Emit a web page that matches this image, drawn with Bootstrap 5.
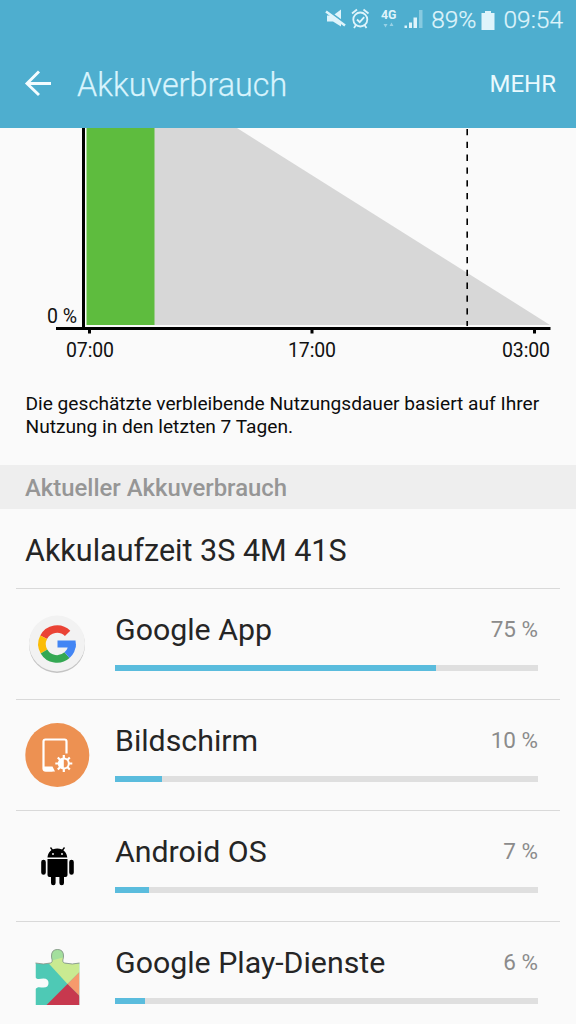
<!DOCTYPE html>
<html lang="de">
<head>
<meta charset="utf-8">
<meta name="viewport" content="width=device-width, initial-scale=1">
<title>Akkuverbrauch</title>
<link href="https://cdn.jsdelivr.net/npm/bootstrap@5.3.0/dist/css/bootstrap.min.css" rel="stylesheet">
<style>
body{font-family:Roboto,sans-serif;background:#fafafa;color:#252525;height:1024px;overflow:hidden;line-height:1}
svg{display:block;flex:none;overflow:visible}
.top-area{background:#4eaecf;height:128px}
.status-line{height:40px;padding-right:13px;color:#dff4fb;font-size:24.5px;font-weight:300;-webkit-text-stroke:.25px #dff4fb}
.status-icons{margin-right:5px}
.battery{margin:0 8px 0 5px}
.app-line{height:88px;padding:0 20px 0 24px}
.app-title{font-size:32.3px;font-weight:300;color:#d8f4fd;margin-left:25px;padding-top:2px;-webkit-text-stroke:.25px #d8f4fd}
.more{font-size:24px;color:#e9f9fe}
.chart{height:248px;overflow:hidden}
.note{font-size:19.15px;line-height:23px;color:#0c0c0c;padding:16px 20px 0 25.5px;height:89px}
.section-head{height:44px;background:#eeeeee;color:#969696;font-size:23.9px;font-weight:500;padding:2px 25px 0}
.runtime{height:79px;font-size:30.5px;padding:6px 25px 0}
.rule-top{margin:0 16px;border-top:1px solid #d9d9d9}
.usage{height:111px}
.usage .inner{padding:0 22px 0 9px;height:110px}
.usage-name{font-size:30.3px}
.usage-val{font-size:22.5px;color:#8b8b8b;padding-bottom:2px}
.usage-body{margin-left:26px;padding-top:23px}
.usage-top{height:36px}
.progress{--bs-progress-height:6px;--bs-progress-bg:#dfdfdf;--bs-progress-border-radius:0;--bs-progress-bar-bg:#5abcdd;margin-top:16.500px}
</style>
</head>
<body>
<header class="top-area">
  <div class="status-line d-flex align-items-center justify-content-end">
    <svg class="status-icons" width="108" height="40" viewBox="320 0 108 40" fill="#dff4fb">
      <path d="M329 15.500h6l8-6v17l-8-5h-6z"/>
      <path d="M329 10l19 14" stroke="#4eaecf" stroke-width="2"/><path d="M328 11.500l19 14" stroke="#dff4fb" stroke-width="2.500"/>
      <g transform="translate(1 .5)" fill="none" stroke="#dff4fb" stroke-width="1.800"><circle cx="361.300" cy="19" r="7"/><path d="M353 13l5-4M364.500 9l5 4M357 24.500l-2 3M365.500 24.500l2 3M358 19l2.700 2.700 4.500-5"/></g>
      <text x="383" y="18.500" font-size="12" font-weight="700" textLength="15.500" lengthAdjust="spacingAndGlyphs">4G</text>
      <path d="M385.500 24h4l-2 3.500zM391.500 26l2-3.500 2 3.500z" opacity=".5"/>
      <path d="M406.500 25.500h2.500v2.500h-2.500zM411 22.500h3V28h-3zM415.500 17.500h3.500V28h-3.500z"/><path d="M421 10h3.500v18H421z" opacity=".4"/>
    </svg>
    <span class="pct">89%</span>
    <svg class="battery" width="14" height="19" fill="#dff4fb"><path d="M4 0h6v2h3.500v17H.5V2H4z"/></svg>
    <span class="clock">09:54</span>
  </div>
  <nav class="app-line d-flex align-items-center">
    <svg width="28" height="28" fill="none" stroke="#f4fcff" stroke-width="2.900"><path d="M27 13.500H3M15 1.500L3 13.500l12 11.500"/></svg>
    <span class="app-title">Akkuverbrauch</span>
    <span class="more ms-auto">MEHR</span>
  </nav>
</header>
<main>
  <svg class="chart" width="576" height="248" viewBox="0 128 576 248">
    <path d="M154 128h83l313 197H154z" fill="#d7d7d7"/>
    <path d="M86.500 128h68v197h-68z" fill="#5ebc3e"/>
    <path d="M82 128h3v200h-3zM56 327h494.500v3H56zM88 330h3v3.500h-3zM310.500 330h3v3.500h-3zM533 330h3v3.500h-3z" fill="#000"/>
    <path d="M467.200 128v198" stroke="#000" stroke-width="1.600" stroke-dasharray="6.300 6.500" stroke-dashoffset="-1"/>
    <g font-size="19.500" fill="#111"><text x="47" y="322.500" textLength="30">0 %</text><text x="66" y="356.500" textLength="48">07:00</text><text x="288" y="356.500" textLength="48">17:00</text><text x="502" y="356.500" textLength="48">03:00</text></g>
  </svg>
  <p class="note mb-0">Die geschätzte verbleibende Nutzungsdauer basiert auf Ihrer Nutzung in den letzten 7 Tagen.</p>
  <h2 class="section-head d-flex align-items-center mb-0">Aktueller Akkuverbrauch</h2>
  <div class="runtime d-flex align-items-center">Akkulaufzeit 3S 4M 41S</div>

  <div class="usage"><div class="rule-top"><div class="inner d-flex">
    <svg class="mt-4" width="64" height="64" viewBox="0 0 64 64"><circle cx="32" cy="32" r="28" fill="#c4c4c4"/><circle cx="32" cy="30.500" r="28" fill="#f2f2f2"/>
      <g fill="none" stroke-width="7.600"><path d="M42.600 20.400A15 15 0 0018.640 24.190" stroke="#ea4335"/><path d="M18.640 24.190A15 15 0 0019.010 38.500" stroke="#fbbc05"/><path d="M19.010 38.500A15 15 0 0042 42.180" stroke="#34a853"/><path d="M42 42.180A15 15 0 0047 31" stroke="#4285f4"/></g><path d="M32.500 27.500h18q.6 3 .1 7H32.500z" fill="#4285f4"/>
    </svg>
    <div class="usage-body flex-grow-1"><div class="usage-top d-flex justify-content-between align-items-center"><span class="usage-name">Google App</span><span class="usage-val">75 %</span></div><div class="progress"><div class="progress-bar" style="width:76%"></div></div></div>
  </div></div></div>

  <div class="usage"><div class="rule-top"><div class="inner d-flex">
    <svg class="mt-4" width="64" height="64" viewBox="0 0 64 64"><circle cx="32.300" cy="31" r="32" fill="#ed9152"/>
      <path d="M41.500 29.500V17.500a2 2 0 00-2-2H20.500a2 2 0 00-2 2V44.500a2 2 0 002 2h7" fill="none" stroke="#fff" stroke-width="2.200"/><path d="M18 42.500h9.500l2.500 5H20.500l-2.500-2z" fill="#fff"/>
      <g transform="translate(38.800 39.500)"><path d="M0-8.500V8.500M-8.500 0H8.500M-6-6L6 6M-6 6L6-6" stroke="#fff" stroke-width="2.200"/><circle r="6" fill="#fff"/><path d="M0-4A4 4 0 010 4z" fill="#ed9152"/></g>
    </svg>
    <div class="usage-body flex-grow-1"><div class="usage-top d-flex justify-content-between align-items-center"><span class="usage-name">Bildschirm</span><span class="usage-val">10 %</span></div><div class="progress"><div class="progress-bar" style="width:11.100%"></div></div></div>
  </div></div></div>

  <div class="usage"><div class="rule-top"><div class="inner d-flex">
    <svg class="mt-4" width="64" height="64" viewBox="0 0 64 64"><path d="M22.500 22.500C23 17.500 26 13.500 32.300 13.500s9.500 4 10 9zM22.500 24h20V40q0 2-2 2h-16q-2 0-2-2z"/><path d="M18.500 27v10.500M46.500 27v10.500M28.300 40.500v7.500M36.700 40.500v7.500" stroke="#000" stroke-width="4.600" stroke-linecap="round"/><path d="M25.500 12.500l3 4M39.500 12.500l-3 4" stroke="#000" stroke-width="1.300"/><g fill="#fff"><circle cx="28" cy="19" r=".9"/><circle cx="37" cy="19" r=".9"/></g></svg>
    <div class="usage-body flex-grow-1"><div class="usage-top d-flex justify-content-between align-items-center"><span class="usage-name">Android OS</span><span class="usage-val">7 %</span></div><div class="progress"><div class="progress-bar" style="width:8%"></div></div></div>
  </div></div></div>

  <div class="usage"><div class="rule-top"><div class="inner d-flex">
    <svg class="mt-4" width="64" height="64" viewBox="0.500 0 64 64"><defs><clipPath id="puzzle"><path d="M11 17q8 2 15 0c3-1 1-4 1-7q0-6.500 6-6.500t6 6.500c0 3-2 6 1 7q8 2 15 0v42H11V43c2-3 5-1.500 8-1.500q5 0 5-4.500t-5-4.500c-3 0-6 1.500-8-1z"/></clipPath></defs>
      <g clip-path="url(#puzzle)"><path d="M0 0h64v64H0z" fill="#4ec9b5"/><path d="M21 14V0h43v17L43 38z" fill="#c9ea91"/><path d="M22 16V0h18v11z" fill="#a3df9d"/><path d="M43 38l14-14v28z" fill="#f69a6c"/><path d="M43 38l22 22H21z" fill="#c7384e"/></g><path d="M11 17q8 2 15 0c3-1 1-4 1-7q0-6.500 6-6.500t6 6.500c0 3-2 6 1 7q8 2 15 0" fill="none" stroke="#89968a" stroke-width=".9"/>
    </svg>
    <div class="usage-body flex-grow-1"><div class="usage-top d-flex justify-content-between align-items-center"><span class="usage-name">Google Play-Dienste</span><span class="usage-val">6 %</span></div><div class="progress"><div class="progress-bar" style="width:7.100%"></div></div></div>
  </div></div></div>
</main>
<script src="https://cdn.jsdelivr.net/npm/bootstrap@5.3.0/dist/js/bootstrap.bundle.min.js"></script>
</body>
</html>
